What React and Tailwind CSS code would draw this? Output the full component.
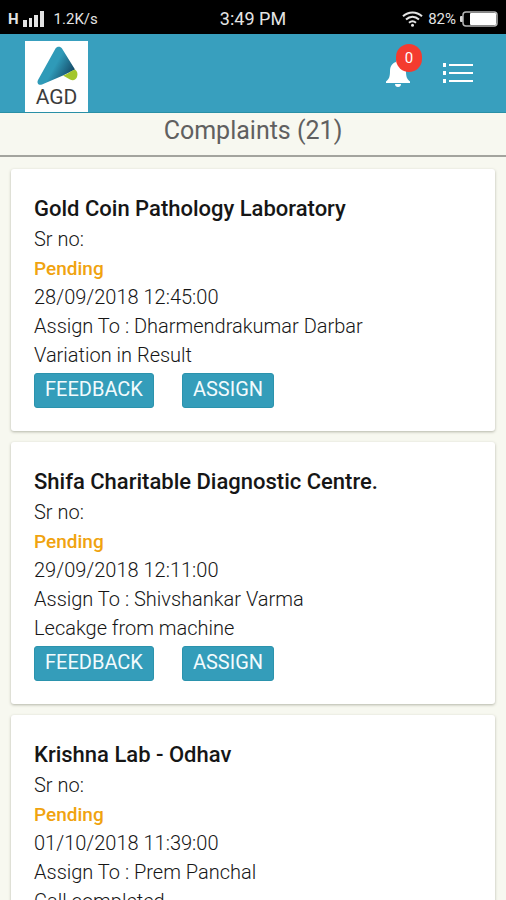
import React from 'react'

const complaints = [
  {
    id: 1,
    name: 'Gold Coin Pathology Laboratory',
    status: 'Pending',
    date: '28/09/2018 12:45:00',
    assignee: 'Dharmendrakumar Darbar',
    note: 'Variation in Result',
  },
  {
    id: 2,
    name: 'Shifa Charitable Diagnostic Centre.',
    status: 'Pending',
    date: '29/09/2018 12:11:00',
    assignee: 'Shivshankar Varma',
    note: 'Lecakge from machine',
  },
  {
    id: 3,
    name: 'Krishna Lab - Odhav',
    status: 'Pending',
    date: '01/10/2018 11:39:00',
    assignee: 'Prem Panchal',
    note: 'Call completed',
  },
]

function StatusBar() {
  return (
    <div className="grid h-[34px] shrink-0 grid-cols-3 items-center bg-black px-2 pt-1 text-[15px] leading-6 text-[#e4e4e4]">
      <div className="flex items-center">
        <span className="font-bold">H</span>
        <svg className="ml-1 h-4 w-[21px]" viewBox="0 0 21 16" fill="currentColor" aria-hidden="true">
          <rect x="0" y="9" width="4" height="7" />
          <rect x="6" y="7" width="3" height="9" />
          <rect x="11" y="4" width="4" height="12" />
          <rect x="17" y="0" width="4" height="16" />
        </svg>
        <span className="ml-[10px]">1.2K/s</span>
      </div>
      <div className="text-center text-[18px]">3:49 PM</div>
      <div className="flex items-center justify-end">
        <svg className="h-4 w-[21px]" viewBox="0 0 21 16" fill="none" stroke="currentColor" strokeWidth="2" aria-hidden="true">
          <path d="M1 5.2C6.5.1 14.5.1 20 5.2" />
          <path d="M4 8.6c4-3.7 9-3.7 13 0" />
          <path d="M7 11.8c2.2-1.9 4.8-1.9 7 0" />
          <circle cx="10.5" cy="14.3" r="1.5" fill="currentColor" stroke="none" />
        </svg>
        <span className="ml-[5px]">82%</span>
        <svg className="ml-1 h-4 w-[38px]" viewBox="0 0 38 16" aria-hidden="true">
          <rect x="0" y="5" width="3" height="6" rx="1" fill="#d8d8d8" />
          <rect x="3" y="1" width="34" height="14" rx="3" fill="#000" stroke="#b5b5b5" strokeWidth="1.5" />
          <rect x="10" y="2" width="26" height="12" rx="1" fill="#fff" />
        </svg>
      </div>
    </div>
  )
}

function Logo() {
  return (
    <a href="#" className="flex h-[71px] w-[63px] flex-col items-center bg-white pt-1">
      <svg className="h-[42px] w-[42px]" viewBox="0 0 42 42" aria-hidden="true">
        <defs>
          <linearGradient id="logoBlue" x1="0.3" y1="0.3" x2="1" y2="0.7">
            <stop offset="0.3" stopColor="#2f9ab8" />
            <stop offset="1" stopColor="#123f5c" />
          </linearGradient>
        </defs>
        <path
          d="M19.500 3.500c1.500-2.500 5-2.500 6.500 0L39 24.500 27 30.500 6 39.500c-3.500 1.200-5.500-1.500-4-4.500L19.500 3.500Z"
          fill="url(#logoBlue)"
        />
        <path d="M27 30.500c5-1 7-4.500 12-6 2.500 1.500 3 4.500 2 7.500-1 3-4 4-7 2.500l-7-4Z" fill="#a3c62c" />
      </svg>
      <span className="text-[21px] leading-5 text-[#3c3c3c]">AGD</span>
    </a>
  )
}

function Header() {
  return (
    <header className="flex h-[79px] shrink-0 items-end justify-between border-b border-[#2990a6] bg-[#389fbe] pr-[33px] pl-[25px]">
      <Logo />
      <div className="flex gap-8 self-center text-white">
        <button type="button" aria-label="Notifications" className="relative flex items-center">
          <svg className="h-7 w-[26px]" viewBox="0 0 26 28" fill="currentColor" aria-hidden="true">
            <path d="M13 1c-1.300 0-2 .8-2 2C7 4.200 5 7.500 5 12c0 5.500-.8 8-4 10.500V24h24v-1.500c-3.200-2.500-4-5-4-10.500 0-4.500-2-7.800-6-9 0-1.200-.7-2-2-2Z" />
            <path d="M10 25h6c0 1.800-1.200 3-3 3s-3-1.200-3-3Z" />
          </svg>
          <span className="absolute -top-[15px] left-[11px] flex h-7 w-[26px] items-center justify-center rounded-full bg-[#f43b2f] text-[15px]">
            0
          </span>
        </button>
        <button type="button" aria-label="Menu">
          <svg className="h-5 w-[30px]" viewBox="0 0 30 20" fill="currentColor" aria-hidden="true">
            <rect x="0" y="0" width="3" height="4" />
            <rect x="6" y="1" width="24" height="2" />
            <rect x="0" y="8" width="3" height="4" />
            <rect x="6" y="9" width="24" height="2" />
            <rect x="0" y="16" width="3" height="4" />
            <rect x="6" y="17" width="24" height="2" />
          </svg>
        </button>
      </div>
    </header>
  )
}

function ActionButton({ children }) {
  return (
    <button
      type="button"
      className="h-[35px] rounded-[3px] border border-[#2b93ad] bg-[#349dba] px-[10px] pb-1 text-[20px] leading-7 font-normal text-[#f2fbfd]"
    >
      {children}
    </button>
  )
}

function ComplaintCard({ complaint }) {
  return (
    <article className="rounded-[3px] bg-white px-[23px] py-[23px] text-[20px] leading-[29px] font-light text-[#161616] shadow-[0_1px_3px_#b4b5a8]">
      <h2 className="text-[22px] leading-[33px] font-medium">{complaint.name}</h2>
      <p>Sr no:</p>
      <p className="text-[19px] font-medium text-[#f0a30f]">{complaint.status}</p>
      <p>{complaint.date}</p>
      <p>Assign To : {complaint.assignee}</p>
      <p>{complaint.note}</p>
      <div className="mt-[3px] flex gap-7">
        <ActionButton>FEEDBACK</ActionButton>
        <ActionButton>ASSIGN</ActionButton>
      </div>
    </article>
  )
}

export default function App() {
  return (
    <div className="flex h-screen flex-col overflow-hidden bg-[#f7f8f0] font-[Roboto,sans-serif]">
      <StatusBar />
      <Header />
      <h1 className="h-11 shrink-0 border-b-2 border-[#a3a49e] text-center text-[25px] leading-9 text-[#606060]">
        Complaints (21)
      </h1>
      <main className="flex min-h-0 flex-1 flex-col gap-[11px] overflow-y-auto px-[11px] py-3 [scrollbar-width:none]">
        {complaints.map((complaint) => (
          <ComplaintCard key={complaint.id} complaint={complaint} />
        ))}
      </main>
    </div>
  )
}
